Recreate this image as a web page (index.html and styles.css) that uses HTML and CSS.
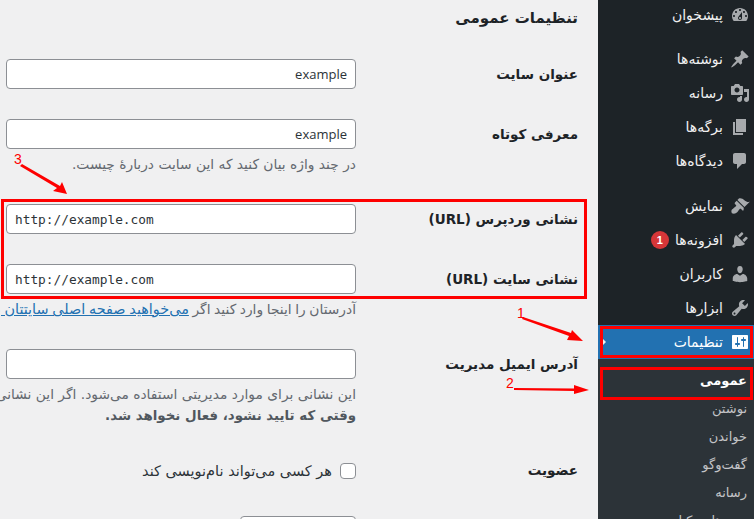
FILE: index.html
```html
<!DOCTYPE html>
<html lang="fa" dir="rtl">
<head>
<meta charset="utf-8">
<title>تنظیمات عمومی</title>
<link rel="stylesheet" href="styles.css">
</head>
<body>
<div class="page">
  <nav class="sidebar">
    <ul class="menu">
      <li class="item"><svg class="icon" viewBox="0 0 20 20"><path d="M3.76 16h12.48c1.1-1.37 1.76-3.11 1.76-5 0-4.42-3.58-8-8-8s-8 3.58-8 8c0 1.89.66 3.63 1.76 5zM10 4c.55 0 1 .45 1 1s-.45 1-1 1-1-.45-1-1 .45-1 1-1zM6 6c.55 0 1 .45 1 1s-.45 1-1 1-1-.45-1-1 .45-1 1-1zm8 0c.55 0 1 .45 1 1s-.45 1-1 1-1-.45-1-1 .45-1 1-1zm-5.37 5.55L12 7v6c0 1.1-.9 2-2 2s-2-.9-2-2c0-.57.24-1.08.63-1.45zM4 10c.55 0 1 .45 1 1s-.45 1-1 1-1-.45-1-1 .45-1 1-1zm12 0c.55 0 1 .45 1 1s-.45 1-1 1-1-.45-1-1 .45-1 1-1zm-5 3c0-.55-.45-1-1-1s-1 .45-1 1 .45 1 1 1 1-.45 1-1z"/></svg><span>پیشخوان</span></li>
      <li class="item sep-first"><svg class="icon" viewBox="0 0 20 20"><path d="M10.44 3.02l1.82-1.82 6.36 6.35-1.83 1.82c-1.05-.68-2.48-.57-3.41.36l-.75.75c-.92.93-1.04 2.35-.35 3.41l-1.83 1.82-2.41-2.41-2.8 2.79c-.42.42-3.38 2.71-3.8 2.29s1.86-3.39 2.28-3.81l2.79-2.79L4.1 9.36l1.83-1.82c1.05.69 2.48.57 3.4-.36l.75-.75c.93-.92 1.05-2.35.36-3.41z"/></svg><span>نوشته‌ها</span></li>
      <li class="item"><svg class="icon" viewBox="0 0 20 20"><path d="M13 11V4c0-.55-.45-1-1-1h-1.67L9 1H5L3.67 3H2c-.55 0-1 .45-1 1v7c0 .55.45 1 1 1h10c.55 0 1-.45 1-1zM7 4.5c1.38 0 2.5 1.12 2.5 2.5S8.38 9.5 7 9.5 4.5 8.38 4.5 7 5.62 4.5 7 4.5zM14 6h5v10.5c0 1.38-1.12 2.5-2.5 2.5S14 17.88 14 16.5s1.12-2.5 2.5-2.5c.17 0 .34.02.5.05V9h-3V6zm-4 8.05V13h2v3.5c0 1.38-1.12 2.5-2.5 2.5S7 17.88 7 16.5 8.12 14 9.5 14c.17 0 .34.02.5.05z"/></svg><span>رسانه</span></li>
      <li class="item"><svg class="icon" viewBox="0 0 20 20"><path d="M6 15V2h10v13H6zm-1 1h8v2H3V5h2v11z"/></svg><span>برگه‌ها</span></li>
      <li class="item"><svg class="icon" viewBox="0 0 20 20"><path d="M5 2h9c1.1 0 2 .9 2 2v7c0 1.1-.9 2-2 2h-2l-5 5v-5H5c-1.1 0-2-.9-2-2V4c0-1.1.9-2 2-2z"/></svg><span>دیدگاه‌ها</span></li>
      <li class="item sep"><svg class="icon" viewBox="0 0 20 20"><path d="M14.48 11.06L7.41 3.99l1.5-1.5c.5-.56 2.3-.47 3.51.32 1.21.8 1.43 1.28 2.91 2.1 1.18.64 2.45 1.26 4.45.85zm-.71.71L6.7 4.7 4.93 6.47c-.39.39-.39 1.02 0 1.41l1.06 1.06c.39.39.39 1.03 0 1.42-.6.6-1.43 1.11-2.21 1.69-.35.26-.7.53-1.01.84C1.43 13.23.91 15.24 1.87 17.2c1.96.96 3.97.44 5.32-.9.31-.31.58-.66.84-1.01.58-.78 1.09-1.61 1.69-2.21.39-.39 1.02-.39 1.41 0l1.06 1.06c.39.39 1.02.39 1.41 0z"/></svg><span>نمایش</span></li>
      <li class="item"><svg class="icon" viewBox="0 0 20 20"><path d="M13.11 4.36L9.87 7.6 8 5.73l3.24-3.24c.35-.34 1.05-.2 1.56.32.52.51.66 1.21.31 1.55zm-8 1.77l.91-1.12 9.01 9.01-1.19.84c-.71.71-2.63 1.16-3.82 1.16H6.14L4.9 17.26c-.59.59-1.54.59-2.12 0-.59-.58-.59-1.53 0-2.12l1.24-1.24v-3.88c0-1.13.4-3.19 1.09-3.89zm7.26 3.97l3.24-3.24c.34-.35 1.04-.21 1.55.31.52.51.66 1.21.31 1.55l-3.24 3.25z"/></svg><span>افزونه‌ها</span><b class="badge">1</b></li>
      <li class="item"><svg class="icon" viewBox="0 0 20 20"><path d="M10 9.25c-2.27 0-2.73-3.44-2.73-3.44C7 4.02 7.82 2 9.97 2c2.16 0 2.98 2.02 2.71 3.81 0 0-.41 3.44-2.68 3.44zm0 2.57L12.72 10c2.39 0 4.52 2.33 4.52 4.53v2.49s-3.65 1.13-7.24 1.13c-3.65 0-7.24-1.13-7.24-1.13v-2.49c0-2.25 1.94-4.48 4.47-4.48z"/></svg><span>کاربران</span></li>
      <li class="item"><svg class="icon" viewBox="0 0 20 20"><path d="M16.68 9.77c-1.34 1.34-3.3 1.67-4.95.99l-5.41 6.52c-.99.99-2.59.99-3.58 0s-.99-2.59 0-3.57l6.52-5.42c-.68-1.65-.35-3.61.99-4.95 1.28-1.28 3.12-1.62 4.72-1.06l-2.89 2.89 2.82 2.82 2.86-2.87c.53 1.58.18 3.39-1.08 4.65zM3.81 16.21c.4.39 1.04.39 1.43 0 .4-.4.4-1.04 0-1.43-.39-.4-1.03-.4-1.43 0-.39.39-.39 1.03 0 1.43z"/></svg><span>ابزارها</span></li>
      <li class="item current"><svg class="icon" viewBox="0 0 20 20"><path d="M18 16V4c0-.55-.45-1-1-1H3c-.55 0-1 .45-1 1v12c0 .55.45 1 1 1h14c.55 0 1-.45 1-1zM8 11h1c.55 0 1 .45 1 1s-.45 1-1 1H8v1.5c0 .28-.22.5-.5.5s-.5-.22-.5-.5V13H6c-.55 0-1-.45-1-1s.45-1 1-1h1V5.5c0-.28.22-.5.5-.5s.5.22.5.5V11zm5-2h-1c-.55 0-1-.45-1-1s.45-1 1-1h1V5.5c0-.28.22-.5.5-.5s.5.22.5.5V7h1c.55 0 1 .45 1 1s-.45 1-1 1h-1v5.5c0 .28-.22.5-.5.5s-.5-.22-.5-.5V9z"/></svg><span>تنظیمات</span></li>
    </ul>
    <ul class="submenu">
      <li class="sub active">عمومی</li>
      <li class="sub">نوشتن</li>
      <li class="sub">خواندن</li>
      <li class="sub">گفت‌وگو</li>
      <li class="sub">رسانه</li>
      <li class="sub">پیوندهای یکتا</li>
    </ul>
  </nav>
  <main class="main">
    <h1 class="title">تنظیمات عمومی</h1>
    <div class="row">
      <label class="label">عنوان سایت</label>
      <div class="field"><input class="input" value="example"></div>
    </div>
    <div class="row">
      <label class="label">معرفی کوتاه</label>
      <div class="field"><input class="input" value="example">
        <p class="desc">در چند واژه بیان کنید که این سایت دربارهٔ چیست.</p></div>
    </div>
    <div class="row">
      <label class="label">نشانی وردپرس (URL)</label>
      <div class="field"><input class="input code" dir="ltr" value="http://example.com"></div>
    </div>
    <div class="row">
      <label class="label">نشانی سایت (URL)</label>
      <div class="field"><input class="input code" dir="ltr" value="http://example.com">
        <p class="desc tight">آدرستان را اینجا وارد کنید اگر <a class="link">می‌خواهید صفحه اصلی سایتتان با نشانی نصب وردپرس فرق داشته باشد</a></p></div>
    </div>
    <div class="row">
      <label class="label">آدرس ایمیل مدیریت</label>
      <div class="field"><input class="input" value="">
        <p class="desc">این نشانی برای موارد مدیریتی استفاده می‌شود. اگر این نشانی را تغییر دهید، برای تایید به نشانی جدید ایمیل می‌فرستیم.</p>
        <p class="desc strong">وقتی که تایید نشود، فعال نخواهد شد.</p></div>
    </div>
    <div class="row">
      <label class="label">عضویت</label>
      <div class="field check-field"><span class="checkbox"></span><span class="check-text">هر کسی می‌تواند نام‌نویسی کند</span></div>
    </div>
    <div class="row">
      <label class="label">نقش کاربر تازه</label>
      <div class="field"><span class="select"></span></div>
    </div>
  </main>
  <div class="mark box-urls"></div>
  <div class="mark box-menu"></div>
  <div class="mark box-sub"></div>
  <svg class="arrows" viewBox="0 0 754 519">
    <path d="M523 317 L571 333 L572 330 L583 341 L567 340 L569 336 L522 319 Z"/>
    <path d="M514 388 L574 388.5 L574 385 L589 390 L574 394 L574 391 L514 390 Z"/>
    <path d="M22 164 L60 186 L62 182 L67 194 L53 191 L57 188 L20 166 Z"/>
  </svg>
  <span class="num n1">1</span>
  <span class="num n2">2</span>
  <span class="num n3">3</span>
</div>
</body>
</html>
```
FILE: styles.css
```css
* { box-sizing: border-box; }
html, body { margin: 0; height: 100%; overflow: hidden; }
body { background: #f0f0f1; color: #1d2327; font-family: "DejaVu Sans", "Liberation Sans", sans-serif; font-size: 13px; }
.page { position: relative; display: flex; flex-direction: row; width: 754px; height: 519px; overflow: hidden; }

.sidebar { flex: 0 0 156px; height: 519px; background: #1d2327; overflow: hidden; }
.menu, .submenu { list-style: none; margin: 0; padding: 0; }
.item { display: flex; align-items: center; gap: 7px; height: 34px; padding-right: 4px; color: #f0f0f1; font-size: 14px; }
.item.sep-first { margin-top: 12px; }
.item.sep { margin-top: 11px; }
.item:first-child { height: 30px; }
.icon { width: 20px; height: 20px; fill: #a7aaad; flex: none; }
.badge { width: 18px; height: 18px; border-radius: 50%; background: #d63638; color: #fff; font: bold 11px/18px "Liberation Sans", sans-serif; text-align: center; margin-right: -1px; }
.item.current { background: #2271b1; color: #fff; position: relative; }
.item.current .icon { fill: #fff; }
.item.current::after { content: ""; position: absolute; left: 3px; top: 12px; border: 5px solid transparent; border-left-color: #f0f0f1; }
.submenu { background: #2c3338; padding: 8px 0; }
.sub { height: 28px; line-height: 28px; padding-right: 7px; font-size: 13px; color: #c3c4c7; }
.sub.active { color: #fff; font-weight: 700; font-size: 13px; }

.main { flex: 1 0 0; min-width: 0; padding: 0 20px 0 0; overflow: hidden; white-space: nowrap; }
.title { margin: 0; height: 44px; padding-top: 6px; font-size: 15px; font-weight: 700; line-height: 24px; color: #1d2327; }
.row { display: flex; padding: 15px 0; }
.label { flex: 0 0 222px; height: 30px; font-size: 13.5px; font-weight: 700; line-height: 31px; }
.field { flex: 0 0 350px; width: 350px; }
.input { display: block; width: 350px; height: 30px; padding: 0 8px; border: 1px solid #8c8f94; border-radius: 4px; background: #fff; color: #2c3338; font-family: "Open Sans", "Liberation Sans", sans-serif; font-size: 13px; text-align: right; direction: ltr; }
.input.code { font-family: "DejaVu Sans Mono", monospace; font-size: 12.8px; text-align: left; }
.desc { margin: 6px 0 0; font-size: 13.8px; line-height: 19px; color: #646970; }
.desc.tight { word-spacing: -0.8px; }
.desc.strong { margin-top: 3px; font-size: 13.4px; line-height: 18px; font-weight: 700; color: #50575e; }
.link { color: #2271b1; text-decoration: underline; font-size: 14.4px; }
.check-field { display: flex; align-items: center; gap: 8px; height: 31px; }
.checkbox { flex: none; width: 16px; height: 16px; border: 1px solid #8c8f94; border-radius: 4px; background: #fff; }
.check-text { font-size: 14.5px; color: #2c3338; }
.select { display: block; width: 116px; height: 30px; border: 1px solid #8c8f94; border-radius: 4px; background: #fff; }

.mark { position: absolute; border: 3px solid #fe0000; }
.box-urls { left: 1px; top: 199px; width: 586px; height: 100px; }
.box-menu { left: 600px; top: 326px; width: 153px; height: 32px; }
.box-sub { left: 600px; top: 367px; width: 153px; height: 33px; }
.arrows { position: absolute; left: 0; top: 0; width: 754px; height: 519px; fill: #fe0000; pointer-events: none; }
.num { position: absolute; color: #fe0000; font: 14px/14px "Liberation Sans", sans-serif; }
.n1 { left: 517px; top: 306px; }
.n2 { left: 506px; top: 376px; }
.n3 { left: 14px; top: 152px; }
```
